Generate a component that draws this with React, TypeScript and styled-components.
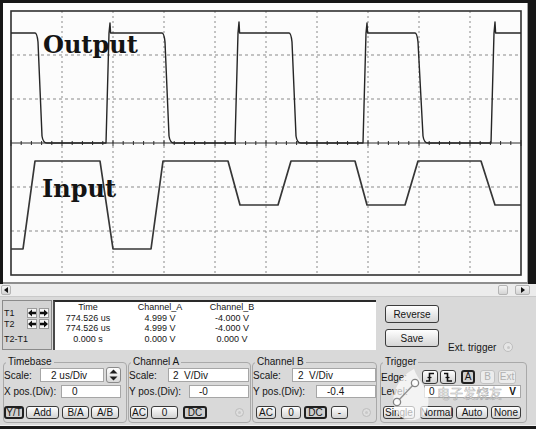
import React from "react";
import styled, { createGlobalStyle, css } from "styled-components";

const GlobalStyle = createGlobalStyle`
  html, body { margin: 0; padding: 0; }
  body {
    background: #d9d9d9;
    font-family: "Liberation Sans", Arial, sans-serif;
    color: #151515;
  }
  * { box-sizing: border-box; }
`;

/* ---------- window frame ---------- */

const Window = styled.div`
  position: relative;
  width: 536px;
  height: 429px;
  overflow: hidden;
  display: flex;
  flex-direction: column;
  background: #d9d9d9;
`;

const Screen = styled.div`
  flex: none;
  height: 284px;
  padding: 3px 8px 0 3px;
  background: #161616;
  display: flex;
`;

const Graticule = styled.div`
  flex: 1;
  display: flex;
  background: #fcfcfc;
  border-bottom: 2px solid #8e8e8e;
  border-right: 1px solid #a0a0a0;
  svg { display: block; }
`;

const ScrollBar = styled.div`
  flex: none;
  height: 13px;
  display: flex;
  align-items: center;
  padding: 0 6px 0 1px;
  background: #ececec;
  border-bottom: 1px solid #c9c9c9;
`;

const ScrollTrack = styled.div`
  flex: 1;
`;

const ScrollKey = styled.div<{ $w: number; $ml?: number }>`
  width: ${(p) => p.$w}px;
  height: 10px;
  margin-left: ${(p) => p.$ml ?? 0}px;
  display: flex;
  align-items: center;
  justify-content: center;
  background: linear-gradient(#f4f4f4, #d4d4d4);
  border: 1px solid #b4b4b4;
  border-radius: 2px;
`;

const Panel = styled.div`
  flex: 1;
  display: flex;
  flex-direction: column;
  padding: 3px 0 0 2px;
`;

const BottomEdge = styled.div`
  flex: none;
  height: 4px;
  background: #1a1a1a;
  border-top: 1px solid #f2f2f2;
`;

/* ---------- cursor readout ---------- */

const ReadoutRow = styled.div`
  display: flex;
  height: 50px;
`;

const CursorBox = styled.div`
  width: 50px;
  border: 1px solid #8a8a8a;
  background: #d3d3d3;
  display: grid;
  grid-template-columns: 23px 12px 12px;
  grid-template-rows: 11px 11px 1fr;
  align-items: center;
  padding: 6px 0 0 1px;
  font-size: 9px;
`;

const CursorDelta = styled.div`
  grid-column: 1 / -1;
  align-self: center;
`;

const NudgeKey = styled.div`
  width: 10px;
  height: 10px;
  display: flex;
  align-items: center;
  justify-content: center;
  background: #f6f6f6;
  border: 1px solid #9a9a9a;
`;

const ReadoutTable = styled.div`
  margin-left: 1px;
  width: 323px;
  background: #ffffff;
  border-top: 2px solid #2a2a2a;
  border-left: 2px solid #4a4a4a;
  display: grid;
  grid-template-columns: 66px 78px 66px;
  grid-template-rows: 11px 10px 10px 12px;
  align-content: start;
  align-items: center;
  font-size: 9px;
  line-height: 1;
  text-align: center;
`;

const ActionColumn = styled.div`
  margin-left: 9px;
  width: 54px;
  padding-top: 5px;
  display: flex;
  flex-direction: column;
  gap: 6px;
`;

const ActionButton = styled.div`
  height: 18px;
  display: flex;
  align-items: center;
  justify-content: center;
  font-size: 10px;
  background: linear-gradient(#ffffff, #e6e6e6 60%, #d6d6d6);
  border: 1px solid #3c3c3c;
  border-radius: 3px;
`;

const ExtTrigger = styled.div`
  margin-left: 9px;
  align-self: flex-end;
  margin-bottom: -2px;
  display: flex;
  align-items: center;
  gap: 7px;
  font-size: 10px;
  height: 10px;
`;

const Radio = styled.span`
  width: 10px;
  height: 10px;
  border-radius: 50%;
  border: 1px solid #bdbdbd;
  background: #e6e6e6;
  display: inline-flex;
  align-items: center;
  justify-content: center;
  &::after {
    content: "";
    width: 3px;
    height: 3px;
    border-radius: 50%;
    background: #c8c8c8;
  }
`;

/* ---------- settings groups ---------- */

const SettingsRow = styled.div`
  margin-top: 6px;
  display: flex;
  height: 67px;
`;

const Group = styled.fieldset<{ $w: number; $ml: number; $pr: number }>`
  margin: 0 0 0 ${(p) => p.$ml}px;
  width: ${(p) => p.$w}px;
  height: 67px;
  min-width: 0;
  border: 1px solid #a9a9a9;
  border-radius: 4px;
  padding: 0 ${(p) => p.$pr}px 2px 0;
  display: flex;
  flex-direction: column;
  font-size: 10px;
`;

const GroupTitle = styled.legend`
  font-size: 10px;
  line-height: 12px;
  padding: 0 2px;
  margin-left: 2px;
`;

const FieldRow = styled.div<{ $h: number; $mt: number }>`
  display: flex;
  align-items: center;
  height: ${(p) => p.$h}px;
  margin-top: ${(p) => p.$mt}px;
  white-space: nowrap;
`;

const FieldLabel = styled.span<{ $w?: number }>`
  ${(p) =>
    p.$w !== undefined &&
    css`
      width: ${p.$w}px;
      flex: none;
    `}
`;

const Field = styled.div<{ $w: number; $pad: number }>`
  margin-left: auto;
  width: ${(p) => p.$w}px;
  height: 100%;
  display: flex;
  align-items: center;
  justify-content: space-between;
  padding: 0 4px 0 ${(p) => p.$pad}px;
  background: #ffffff;
  border: 1px solid #a6a6a6;
  font-size: 10px;
`;

const Spinner = styled.div`
  width: 15px;
  height: 16px;
  margin-left: 2px;
  display: flex;
  flex-direction: column;
  align-items: center;
  justify-content: center;
  gap: 2px;
  background: linear-gradient(#fdfdfd, #d8d8d8);
  border: 1px solid #8a8a8a;
  border-radius: 3px;
`;

const KeyRow = styled.div`
  display: flex;
  align-items: center;
  height: 13px;
  margin-top: 8px;
`;

const Key = styled.div<{ $w: number; $ml: number; $on?: boolean; $off?: boolean }>`
  width: ${(p) => p.$w}px;
  height: 13px;
  margin-left: ${(p) => p.$ml}px;
  display: flex;
  align-items: center;
  justify-content: center;
  font-size: 10px;
  line-height: 1;
  background: linear-gradient(#ffffff, #e4e4e4 60%, #d2d2d2);
  border: 1px solid #3a3a3a;
  border-radius: 3px;
  ${(p) =>
    p.$on &&
    css`
      border: 2px solid #202020;
      background: #cfcfcf;
    `}
  ${(p) =>
    p.$off &&
    css`
      color: #b0b0b0;
      border-color: #c2c2c2;
      background: #ececec;
    `}
`;

const EdgeKey = styled(Key)`
  height: 14px;
`;

const GroupDot = styled(Radio)`
  margin-left: auto;
  margin-right: 5px;
  width: 9px;
  height: 9px;
  background: #dedede;
`;

/* ---------- site mark over the trigger group ---------- */

const SiteMark = styled.div`
  position: absolute;
  left: 388px;
  top: 366px;
  display: flex;
  pointer-events: none;
`;

const SiteMarkText = styled.span`
  margin: 20px 0 0 5px;
  font-family: "Noto Sans CJK SC", sans-serif;
  font-size: 13px;
  line-height: 14px;
  color: rgba(255, 255, 255, 0.75);
  -webkit-text-stroke: 0.5px rgba(110, 110, 110, 0.6);
`;

/* ---------- drawings ---------- */

const PLOT = { left: 11, right: 521, top: 11, bottom: 275 };
const DIV_X = (PLOT.right - PLOT.left) / 10;
const DIV_Y = (PLOT.bottom - PLOT.top) / 6;
const MID_Y = PLOT.top + DIV_Y * 3;

const OUTPUT_TRACE =
  "M11 33 H35 Q37 33 38 42 L42 136 Q43 143 47 143 H106 L109 33 L110 23 L110.6 33 " +
  "H162 Q164 33 165 42 L169 136 Q170 143 174 143 H235 L238 33 L239 22 L239.6 33 " +
  "H289 Q291 33 292 42 L296 136 Q297 143 301 143 H363 L366 33 L367 23 L367.6 33 " +
  "H415 Q417 33 418 42 L423 136 Q424 143 428 143 H491 L494 33 L495 22 L495.6 33 H521";

const INPUT_TRACE =
  "M11 249 H23 L35 161 H100 L113 249 H151 L163 161 H228 L240 205 H278 L291 161 " +
  "H355 L367 205 H405 L418 161 H481 L495 205 H521";

function ScopeTraces() {
  const verticals = Array.from({ length: 9 }, (_, i) => PLOT.left + DIV_X * (i + 1));
  const horizontals = [1, 2, 4, 5].map((i) => PLOT.top + DIV_Y * i);
  const ticks = Array.from({ length: 51 }, (_, i) => PLOT.left + (DIV_X / 5) * i);
  return (
    <svg width="524" height="279" viewBox="3 3 524 279">
      {verticals.map((x) => (
        <line key={`v${x}`} x1={x} x2={x} y1={PLOT.top} y2={PLOT.bottom} stroke="#8a8a8a" strokeWidth="1" strokeDasharray="2 3" />
      ))}
      {horizontals.map((y) => (
        <line key={`h${y}`} x1={PLOT.left} x2={PLOT.right} y1={y} y2={y} stroke="#8a8a8a" strokeWidth="1" strokeDasharray="3 3" />
      ))}
      <line x1={PLOT.left} x2={PLOT.right} y1={MID_Y} y2={MID_Y} stroke="#2c2c2c" strokeWidth="1.2" />
      {ticks.map((x, i) => (
        <line key={`t${i}`} x1={x} x2={x} y1={MID_Y - (i % 5 === 0 ? 3 : 2)} y2={MID_Y + (i % 5 === 0 ? 3 : 2)} stroke="#2c2c2c" strokeWidth="1" />
      ))}
      <rect x={PLOT.left} y={PLOT.top} width={PLOT.right - PLOT.left} height={PLOT.bottom - PLOT.top} fill="none" stroke="#303030" strokeWidth="1.6" />
      <path d={OUTPUT_TRACE} fill="none" stroke="#262626" strokeWidth="1.4" strokeLinejoin="round" />
      <path d={INPUT_TRACE} fill="none" stroke="#363636" strokeWidth="1.7" strokeLinejoin="round" />
      <text x="43" y="53" fontFamily="'DejaVu Serif', serif" fontWeight="bold" fontSize="24" fill="#141414">
        Output
      </text>
      <text x="42" y="197" fontFamily="'DejaVu Serif', serif" fontWeight="bold" fontSize="24" fill="#141414">
        Input
      </text>
    </svg>
  );
}

function Triangle({ dir }: { dir: "left" | "right" }) {
  return (
    <svg width="8" height="8" viewBox="0 0 8 8">
      <path d={dir === "left" ? "M6 1 L2 4 L6 7 Z" : "M2 1 L6 4 L2 7 Z"} fill="#111" />
    </svg>
  );
}

function SpinArrow({ dir }: { dir: "up" | "down" }) {
  return (
    <svg width="9" height="5" viewBox="0 0 9 5">
      <path d={dir === "up" ? "M0.5 4.5 L4.5 0.5 L8.5 4.5 Z" : "M0.5 0.5 L4.5 4.5 L8.5 0.5 Z"} fill="#1c1c1c" />
    </svg>
  );
}

function BlockArrow({ dir }: { dir: "left" | "right" }) {
  return (
    <svg width="8" height="8" viewBox="0 0 8 8">
      <path
        d={dir === "left" ? "M0 4 L4 0.5 V2.8 H8 V5.2 H4 V7.5 Z" : "M8 4 L4 0.5 V2.8 H0 V5.2 H4 V7.5 Z"}
        fill="#0e0e0e"
      />
    </svg>
  );
}

function EdgeGlyph({ rising }: { rising: boolean }) {
  return (
    <svg width="10" height="10" viewBox="0 0 10 10">
      <path
        d={rising ? "M1 9 H4.5 V1.5 H9" : "M1 1.5 H4.5 V9 H9"}
        fill="none"
        stroke="#111"
        strokeWidth="1.6"
      />
      <path d="M2.5 5.5 H6.5" stroke="#111" strokeWidth="1.2" />
    </svg>
  );
}

function MarkBadge() {
  return (
    <svg width="44" height="58" viewBox="0 0 44 58">
      <path
        d="M26 3 C12 10 3 26 6 40 C9 52 20 57 30 53 C38 49 42 40 40 30 C38 20 30 14 26 3 Z"
        fill="rgba(255,255,255,0.68)"
      />
      <line x1="9" y1="36" x2="27" y2="17" stroke="rgba(120,120,120,0.8)" strokeWidth="1.4" />
      <circle cx="9" cy="36" r="3.6" fill="rgba(255,255,255,0.9)" stroke="rgba(110,110,110,0.85)" strokeWidth="1.3" />
      <circle cx="27" cy="17" r="3.6" fill="rgba(255,255,255,0.9)" stroke="rgba(110,110,110,0.85)" strokeWidth="1.3" />
    </svg>
  );
}

/* ---------- page ---------- */

const readings = [
  ["Time", "Channel_A", "Channel_B"],
  ["774.526 us", "4.999 V", "-4.000 V"],
  ["774.526 us", "4.999 V", "-4.000 V"],
  ["0.000 s", "0.000 V", "0.000 V"],
];

export default function App() {
  return (
    <>
      <GlobalStyle />
      <Window>
        <Screen>
          <Graticule>
            <ScopeTraces />
          </Graticule>
        </Screen>

        <ScrollBar>
          <ScrollKey $w={10}>
            <Triangle dir="left" />
          </ScrollKey>
          <ScrollTrack />
          <ScrollKey $w={10} />
          <ScrollKey $w={15} $ml={7}>
            <Triangle dir="right" />
          </ScrollKey>
        </ScrollBar>

        <Panel>
          <ReadoutRow>
            <CursorBox>
              <span>T1</span>
              <NudgeKey>
                <BlockArrow dir="left" />
              </NudgeKey>
              <NudgeKey>
                <BlockArrow dir="right" />
              </NudgeKey>
              <span>T2</span>
              <NudgeKey>
                <BlockArrow dir="left" />
              </NudgeKey>
              <NudgeKey>
                <BlockArrow dir="right" />
              </NudgeKey>
              <CursorDelta>T2-T1</CursorDelta>
            </CursorBox>

            <ReadoutTable>
              {readings.flatMap((row, r) =>
                row.map((cell, c) => <span key={`${r}-${c}`}>{cell}</span>)
              )}
            </ReadoutTable>

            <ActionColumn>
              <ActionButton>Reverse</ActionButton>
              <ActionButton>Save</ActionButton>
            </ActionColumn>

            <ExtTrigger>
              <span>Ext. trigger</span>
              <Radio />
            </ExtTrigger>
          </ReadoutRow>

          <SettingsRow>
            <Group $w={124} $ml={1} $pr={5}>
              <GroupTitle>Timebase</GroupTitle>
              <FieldRow $h={14} $mt={0}>
                <FieldLabel>Scale:</FieldLabel>
                <Field $w={64} $pad={10}>2 us/Div</Field>
                <Spinner>
                  <SpinArrow dir="up" />
                  <SpinArrow dir="down" />
                </Spinner>
              </FieldRow>
              <FieldRow $h={13} $mt={3}>
                <FieldLabel>X pos.(Div):</FieldLabel>
                <Field $w={60} $pad={10}>0</Field>
              </FieldRow>
              <KeyRow>
                <Key $w={20} $ml={0} $on>Y/T</Key>
                <Key $w={33} $ml={2}>Add</Key>
                <Key $w={27} $ml={3}>B/A</Key>
                <Key $w={28} $ml={2}>A/B</Key>
              </KeyRow>
            </Group>

            <Group $w={123} $ml={1} $pr={1}>
              <GroupTitle>Channel A</GroupTitle>
              <FieldRow $h={14} $mt={0}>
                <FieldLabel>Scale:</FieldLabel>
                <Field $w={81} $pad={4}>2&nbsp;&nbsp;V/Div</Field>
              </FieldRow>
              <FieldRow $h={13} $mt={3}>
                <FieldLabel>Y pos.(Div):</FieldLabel>
                <Field $w={60} $pad={9}>-0</Field>
              </FieldRow>
              <KeyRow>
                <Key $w={18} $ml={1}>AC</Key>
                <Key $w={27} $ml={3}>0</Key>
                <Key $w={24} $ml={5} $on>DC</Key>
                <GroupDot />
              </KeyRow>
            </Group>

            <Group $w={125} $ml={1} $pr={0}>
              <GroupTitle>Channel B</GroupTitle>
              <FieldRow $h={14} $mt={0}>
                <FieldLabel>Scale:</FieldLabel>
                <Field $w={84} $pad={5}>2&nbsp;&nbsp;V/Div</Field>
              </FieldRow>
              <FieldRow $h={13} $mt={3}>
                <FieldLabel>Y pos.(Div):</FieldLabel>
                <Field $w={60} $pad={10}>-0.4</Field>
              </FieldRow>
              <KeyRow>
                <Key $w={20} $ml={3}>AC</Key>
                <Key $w={20} $ml={5}>0</Key>
                <Key $w={23} $ml={3} $on>DC</Key>
                <Key $w={17} $ml={4}>-</Key>
                <GroupDot />
              </KeyRow>
            </Group>

            <Group $w={147} $ml={3} $pr={5}>
              <GroupTitle>Trigger</GroupTitle>
              <FieldRow $h={14} $mt={2}>
                <FieldLabel $w={41}>Edge:</FieldLabel>
                <EdgeKey $w={16} $ml={0}>
                  <EdgeGlyph rising />
                </EdgeKey>
                <EdgeKey $w={16} $ml={2}>
                  <EdgeGlyph rising={false} />
                </EdgeKey>
                <EdgeKey $w={14} $ml={5} $on>A</EdgeKey>
                <EdgeKey $w={15} $ml={5} $off>B</EdgeKey>
                <EdgeKey $w={18} $ml={3} $off>Ext</EdgeKey>
              </FieldRow>
              <FieldRow $h={13} $mt={1}>
                <FieldLabel $w={42}>Level:</FieldLabel>
                <Field $w={97} $pad={4}>
                  <span>0</span>
                  <b>V</b>
                </Field>
              </FieldRow>
              <KeyRow>
                <Key $w={32} $ml={2}>Single</Key>
                <Key $w={33} $ml={5}>Normal</Key>
                <Key $w={32} $ml={3}>Auto</Key>
                <Key $w={30} $ml={3}>None</Key>
              </KeyRow>
            </Group>
          </SettingsRow>
        </Panel>

        <BottomEdge />

        <SiteMark>
          <MarkBadge />
          <SiteMarkText>电子发烧友</SiteMarkText>
        </SiteMark>
      </Window>
    </>
  );
}
